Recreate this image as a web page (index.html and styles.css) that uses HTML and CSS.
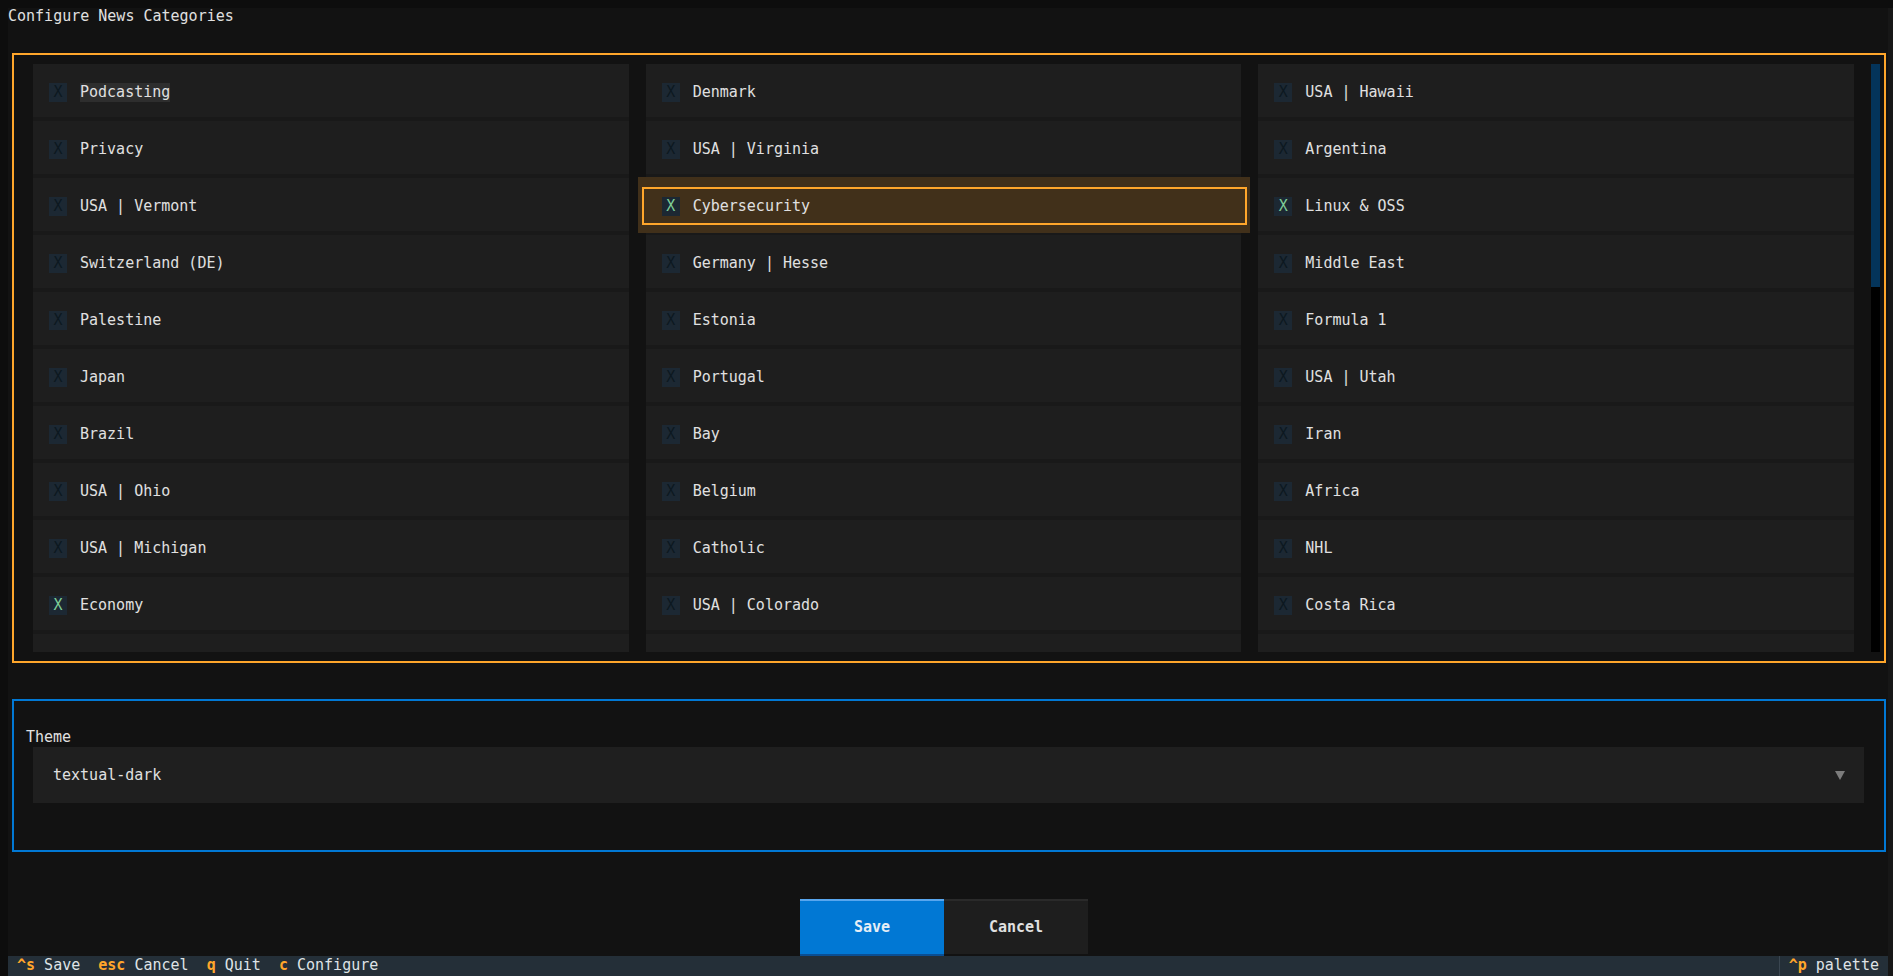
FILE: index.html
```html
<!DOCTYPE html>
<html lang="en">
<head>
<meta charset="utf-8">
<title>Configure News Categories</title>
<link rel="stylesheet" href="styles.css">
</head>
<body>
<div class="screen">
  <div class="app">
    <div class="title">Configure News Categories</div>

    <div class="cats">
      <div class="cats-grid">
        <div class="col">
          <div class="cb"><span class="box">X</span><span class="lbl hover">Podcasting</span></div>
          <div class="cb"><span class="box">X</span><span class="lbl">Privacy</span></div>
          <div class="cb"><span class="box">X</span><span class="lbl">USA | Vermont</span></div>
          <div class="cb"><span class="box">X</span><span class="lbl">Switzerland (DE)</span></div>
          <div class="cb"><span class="box">X</span><span class="lbl">Palestine</span></div>
          <div class="cb"><span class="box">X</span><span class="lbl">Japan</span></div>
          <div class="cb"><span class="box">X</span><span class="lbl">Brazil</span></div>
          <div class="cb"><span class="box">X</span><span class="lbl">USA | Ohio</span></div>
          <div class="cb"><span class="box">X</span><span class="lbl">USA | Michigan</span></div>
          <div class="cb checked"><span class="box">X</span><span class="lbl">Economy</span></div>
          <div class="cb partial"></div>
        </div>
        <div class="col">
          <div class="cb"><span class="box">X</span><span class="lbl">Denmark</span></div>
          <div class="cb"><span class="box">X</span><span class="lbl">USA | Virginia</span></div>
          <div class="cb checked focus"><span class="box">X</span><span class="lbl">Cybersecurity</span></div>
          <div class="cb"><span class="box">X</span><span class="lbl">Germany | Hesse</span></div>
          <div class="cb"><span class="box">X</span><span class="lbl">Estonia</span></div>
          <div class="cb"><span class="box">X</span><span class="lbl">Portugal</span></div>
          <div class="cb"><span class="box">X</span><span class="lbl">Bay</span></div>
          <div class="cb"><span class="box">X</span><span class="lbl">Belgium</span></div>
          <div class="cb"><span class="box">X</span><span class="lbl">Catholic</span></div>
          <div class="cb"><span class="box">X</span><span class="lbl">USA | Colorado</span></div>
          <div class="cb partial"></div>
        </div>
        <div class="col">
          <div class="cb"><span class="box">X</span><span class="lbl">USA | Hawaii</span></div>
          <div class="cb"><span class="box">X</span><span class="lbl">Argentina</span></div>
          <div class="cb checked"><span class="box">X</span><span class="lbl">Linux &amp; OSS</span></div>
          <div class="cb"><span class="box">X</span><span class="lbl">Middle East</span></div>
          <div class="cb"><span class="box">X</span><span class="lbl">Formula 1</span></div>
          <div class="cb"><span class="box">X</span><span class="lbl">USA | Utah</span></div>
          <div class="cb"><span class="box">X</span><span class="lbl">Iran</span></div>
          <div class="cb"><span class="box">X</span><span class="lbl">Africa</span></div>
          <div class="cb"><span class="box">X</span><span class="lbl">NHL</span></div>
          <div class="cb"><span class="box">X</span><span class="lbl">Costa Rica</span></div>
          <div class="cb partial"></div>
        </div>
      </div>
      <div class="scrollbar"><div class="thumb"></div></div>
    </div>

    <div class="theme-box">
      <div class="theme-label">Theme</div>
      <div class="select">
        <span class="select-value">textual-dark</span>
        <svg class="arrow" width="10" height="9" viewBox="0 0 10 9"><polygon points="0,0 10,0 5,9" fill="#7c7c7c"/></svg>
      </div>
    </div>

    <div class="buttons">
      <div class="btn save">Save</div>
      <div class="btn cancel">Cancel</div>
    </div>

    <div class="footer">
      <div class="keys"> <span class="key">^s</span> Save  <span class="key">esc</span> Cancel  <span class="key">q</span> Quit  <span class="key">c</span> Configure </div>
      <div class="palette"> <span class="key">^p</span> palette </div>
    </div>
  </div>
  <div class="edge"></div>
</div>
</body>
</html>
```

FILE: styles.css
```css
html, body {
  margin: 0;
  height: 100%;
}

body {
  background: #0d0d0d;
  font-family: "DejaVu Sans Mono", "Liberation Mono", monospace;
  font-size: 15px;
  line-height: 19px;
  color: #e0e0e0;
  overflow: hidden;
}

.screen {
  display: flex;
  height: 976px;
  padding: 8px 0 0 8px;
  box-sizing: border-box;
}

.app {
  width: 1880px;
  height: 968px;
  background: #121212;
  display: flex;
  flex-direction: column;
  flex: none;
}

.edge {
  width: 5px;
  background: #171717;
  flex: none;
}

.title {
  height: 17px;
  line-height: 17px;
  padding-bottom: 2px;
  white-space: pre;
}

/* categories panel */
.cats {
  margin: 26px 0 0 4px;
  width: 1874px;
  height: 610px;
  box-sizing: border-box;
  border: 2px solid #ffa62b;
  padding: 9px 4px 9px 19px;
  display: flex;
  flex: none;
}

.cats-grid {
  flex: 1;
  display: grid;
  grid-template-columns: repeat(3, 1fr);
  column-gap: 17px;
  height: 588px;
}

.col {
  background: #191919;
  display: flex;
  flex-direction: column;
  gap: 4px;
  min-width: 0;
}

.cb {
  height: 53px;
  box-sizing: border-box;
  padding-top: 3px;
  flex: none;
  background: #1e1e1e;
  display: flex;
  align-items: center;
  padding-left: 16px;
  position: relative;
  white-space: pre;
}

.cb.partial {
  height: 18px;
}

.box {
  width: 18px;
  height: 19px;
  background: #1c2833;
  color: #0c1820;
  text-align: center;
  margin-right: 13px;
  flex: none;
}

.cb.checked .box {
  color: #7fcf98;
}

.lbl.hover {
  background: #2e2e2e;
}

.cb.focus {
  height: 56px;
  margin: -1px -9px -2px -8px;
  padding-left: 24px;
  padding-top: 2px;
  background: #41301a;
}

.cb.focus::after {
  content: "";
  position: absolute;
  top: 10px;
  right: 3px;
  bottom: 8px;
  left: 4px;
  border: 2px solid #ffa62b;
}

.scrollbar {
  width: 9px;
  margin-left: 17px;
  height: 588px;
  background: #000000;
  flex: none;
}

.thumb {
  height: 223px;
  background: #04345a;
}

/* theme panel */
.theme-box {
  margin: 36px 0 0 4px;
  width: 1874px;
  height: 153px;
  box-sizing: border-box;
  border: 2px solid #0178d4;
  padding: 27px 20px 0 12px;
  flex: none;
}

.theme-label {
  height: 19px;
}

.select {
  margin-left: 7px;
  height: 56px;
  background: #1f1f1f;
  display: flex;
  align-items: center;
  justify-content: space-between;
  padding: 1px 19px 0 20px;
  box-sizing: border-box;
}

.arrow {
  display: block;
}

/* buttons */
.buttons {
  margin-top: 47px;
  display: flex;
  justify-content: center;
  padding-right: 8px;
  flex: none;
}

.btn {
  width: 144px;
  height: 57px;
  box-sizing: border-box;
  display: flex;
  align-items: center;
  justify-content: center;
  font-weight: bold;
}

.btn.save {
  background: #0178d4;
  border-top: 2px solid #58a6ee;
  border-bottom: 2px solid #0a4f94;
  color: #e6eef6;
}

.btn.cancel {
  background: #1e1e1e;
  border-top: 2px solid #2a2a2a;
  border-bottom: 2px solid #121212;
  color: #e0e0e0;
}

/* footer */
.footer {
  height: 20px;
  line-height: 19px;
  background: #242f38;
  display: flex;
  justify-content: space-between;
  white-space: pre;
  color: #dfe3e6;
  flex: none;
}

.key {
  color: #ffa62b;
  font-weight: bold;
}

.palette {
  border-left: 1px solid #3a4651;
}
```
